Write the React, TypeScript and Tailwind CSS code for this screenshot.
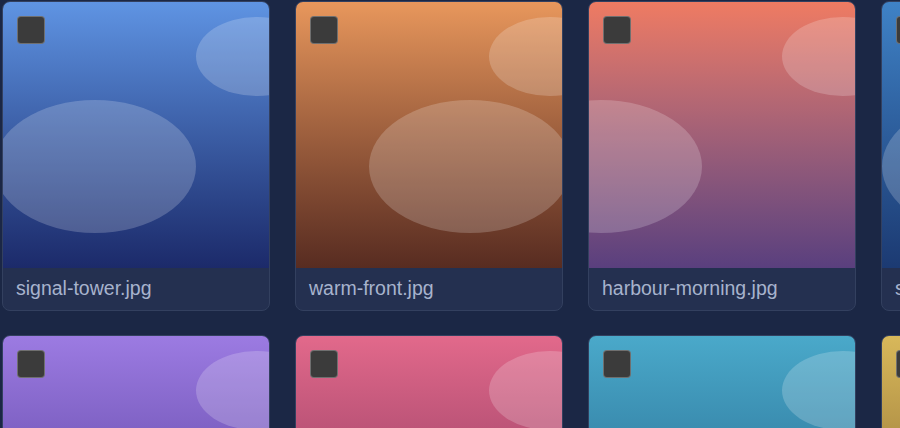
import React from "react";

type Photo = {
  name: string;
  from: string;
  to: string;
  blob: string;
};

// gradient + blob position per thumbnail (classes written out so tailwind picks them up)
const photos: Photo[] = [
  { name: "signal-tower.jpg", from: "from-[#5f94e3]", to: "to-[#1c2a6a]", blob: "left-[-3.5%]" },
  { name: "warm-front.jpg", from: "from-[#e8975c]", to: "to-[#582c21]", blob: "left-[27.5%]" },
  { name: "harbour-morning.jpg", from: "from-[#ef7b62]", to: "to-[#5a3f7e]", blob: "left-[-33.5%]" },
  { name: "storm-coast.jpg", from: "from-[#3f82c6]", to: "to-[#1c3a72]", blob: "left-[0%]" },
  { name: "lavender-field.jpg", from: "from-[#9c7be2]", to: "to-[#4e3590]", blob: "left-[10%]" },
  { name: "rose-dusk.jpg", from: "from-[#e2698b]", to: "to-[#7a2f55]", blob: "left-[20%]" },
  { name: "lagoon.jpg", from: "from-[#4aa9ca]", to: "to-[#1f5a80]", blob: "left-[-20%]" },
  { name: "golden-hour.jpg", from: "from-[#d8b85a]", to: "to-[#7a5a2a]", blob: "left-[5%]" },
];

function Thumb({ photo }: { photo: Photo }) {
  return (
    <div className="w-[268px] shrink-0 bg-[#243050] border border-[#33405f] rounded-lg overflow-hidden">
      <div className={`relative aspect-square w-full overflow-hidden bg-gradient-to-b ${photo.from} ${photo.to}`}>
        <div className="absolute left-[72.5%] top-[5.5%] w-[46%] h-[30%] rounded-[50%] bg-white/20" />
        <div className={`absolute top-[37%] w-[76%] h-[50%] rounded-[50%] bg-white/20 ${photo.blob}`} />
        <div className="absolute left-[14px] top-[14px] w-[28px] h-[28px] rounded-[4px] bg-[#3b3b3b] border border-[#7d7d7d]/80" />
      </div>
      <div className="h-[42px] flex items-center px-[13px]">
        <span className="text-[19.5px] leading-none text-[#a7b3cd] whitespace-nowrap [font-family:'Liberation_Sans',Arial,sans-serif]">
          {photo.name}
        </span>
      </div>
    </div>
  );
}

export default function App() {
  return (
    <div className="w-[900px] h-[428px] overflow-hidden bg-[#1b2745]">
      <div className="grid grid-cols-[repeat(4,268px)] gap-x-[25px] gap-y-[24px] pl-[2px] pt-[1px]">
        {photos.map((p) => (
          <Thumb key={p.name} photo={p} />
        ))}
      </div>
    </div>
  );
}
